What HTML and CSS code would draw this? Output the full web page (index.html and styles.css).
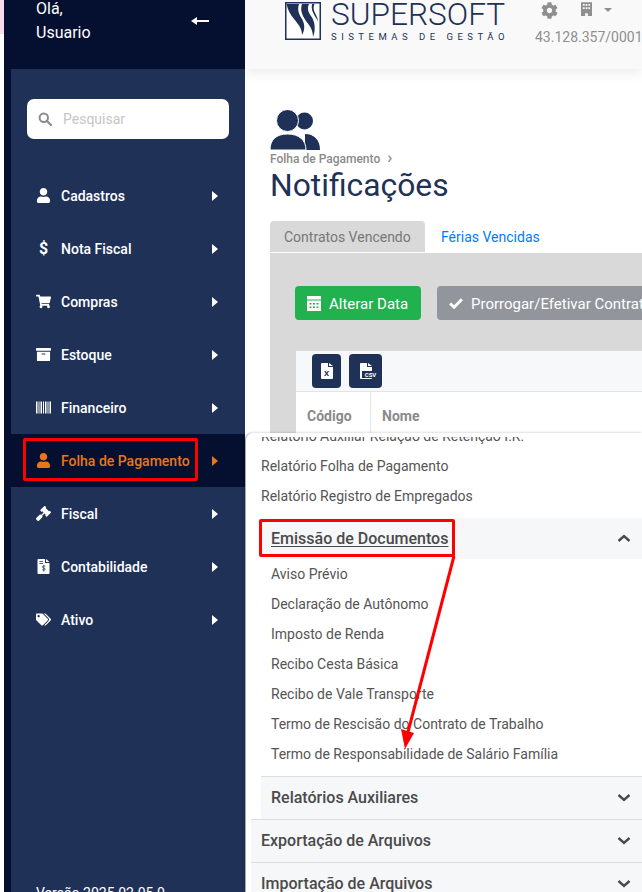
FILE: index.html
```html
<!DOCTYPE html>
<html lang="pt-BR">
<head>
<meta charset="utf-8"/>
<title>Supersoft - Notificações</title>
<link rel="stylesheet" href="styles.css">
</head>
<body>
<div class="strip"><div class="strip-pink"></div></div>

<aside class="sidebar">
  <div class="side-head">
    <div class="hello">Olá,<br>Usuario</div>
    <svg class="back" viewBox="0 0 18 10"><path d="M0 5 L6 1 V4 H18 V6 H6 V9 Z" fill="#fff"/></svg>
  </div>
  <div class="side-body">
    <div class="search">
      <svg class="search-icon" viewBox="0 0 14 14"><circle cx="5.8" cy="5.8" r="4.2" fill="none" stroke="#8a8a8a" stroke-width="2"/><path d="M9 9l4 4" stroke="#8a8a8a" stroke-width="2.2" stroke-linecap="round"/></svg>
      <span class="search-text">Pesquisar</span>
    </div>
    <ul class="menu">
      <li class="menu-item">
        <svg class="menu-icon" viewBox="0 0 448 512"><path fill="currentColor" d="M224 256c70.7 0 128-57.3 128-128S294.7 0 224 0 96 57.3 96 128s57.3 128 128 128zm89.6 32h-16.7c-22.2 10.2-46.9 16-72.9 16s-50.6-5.8-72.9-16h-16.7C60.2 288 0 348.2 0 422.4V464c0 26.5 21.5 48 48 48h352c26.5 0 48-21.5 48-48v-41.6c0-74.2-60.2-134.4-134.4-134.4z"/></svg>
        <span class="menu-label">Cadastros</span><span class="caret"></span>
      </li>
      <li class="menu-item">
        <span class="menu-icon dollar">$</span>
        <span class="menu-label">Nota Fiscal</span><span class="caret"></span>
      </li>
      <li class="menu-item">
        <svg class="menu-icon" viewBox="0 0 576 512"><path fill="currentColor" d="M528.12 301.319l47.273-208C578.806 78.301 567.391 64 551.99 64H159.208l-9.166-44.81C147.758 8.021 137.93 0 126.529 0H24C10.745 0 0 10.745 0 24v16c0 13.255 10.745 24 24 24h69.883l70.248 343.435C147.325 417.1 136 435.222 136 456c0 30.928 25.072 56 56 56s56-25.072 56-56c0-15.674-6.447-29.835-16.824-40h209.647C430.447 426.165 424 440.326 424 456c0 30.928 25.072 56 56 56s56-25.072 56-56c0-22.172-12.888-41.332-31.579-50.405l5.517-24.276c3.413-15.018-8.002-29.319-23.403-29.319H218.117l-6.545-32h293.145c11.206 0 20.92-7.754 23.403-18.681z"/></svg>
        <span class="menu-label">Compras</span><span class="caret"></span>
      </li>
      <li class="menu-item">
        <svg class="menu-icon" viewBox="0 0 512 512"><path fill="currentColor" d="M32 448c0 17.7 14.3 32 32 32h384c17.7 0 32-14.3 32-32V160H32v288zm160-212c0-6.6 5.4-12 12-12h104c6.6 0 12 5.4 12 12v8c0 6.6-5.4 12-12 12H204c-6.6 0-12-5.4-12-12v-8zM480 32H32C14.3 32 0 46.3 0 64v48c0 8.8 7.2 16 16 16h480c8.8 0 16-7.2 16-16V64c0-17.7-14.3-32-32-32z"/></svg>
        <span class="menu-label">Estoque</span><span class="caret"></span>
      </li>
      <li class="menu-item">
        <svg class="menu-icon" viewBox="0 0 15 12"><path fill="currentColor" d="M0 0h1.5v12H0zM2.5 0h1v12h-1zM4.5 0h1.5v12H4.5zM7 0h1v12H7zM9 0h1.5v12H9zM11.5 0h1v12h-1zM13.5 0H15v12h-1.5z"/></svg>
        <span class="menu-label">Financeiro</span><span class="caret"></span>
      </li>
      <li class="menu-item active">
        <svg class="menu-icon" viewBox="0 0 448 512"><path fill="currentColor" d="M224 256c70.7 0 128-57.3 128-128S294.7 0 224 0 96 57.3 96 128s57.3 128 128 128zm89.6 32h-16.7c-22.2 10.2-46.9 16-72.9 16s-50.6-5.8-72.9-16h-16.7C60.2 288 0 348.2 0 422.4V464c0 26.5 21.5 48 48 48h352c26.5 0 48-21.5 48-48v-41.6c0-74.2-60.2-134.4-134.4-134.4z"/></svg>
        <span class="menu-label">Folha de Pagamento</span><span class="caret"></span>
      </li>
      <li class="menu-item">
        <svg class="menu-icon" viewBox="0 0 512 512"><path fill="currentColor" d="M504.971 199.362l-22.627-22.627c-9.373-9.373-24.569-9.373-33.941 0l-5.657 5.657L329.608 69.255l5.657-5.657c9.373-9.373 9.373-24.569 0-33.941L312.638 7.029c-9.373-9.373-24.569-9.373-33.941 0L154.246 131.48c-9.373 9.373-9.373 24.569 0 33.941l22.627 22.627c9.373 9.373 24.569 9.373 33.941 0l5.657-5.657 39.598 39.598-81.04 81.04-5.657-5.657c-12.497-12.497-32.758-12.497-45.255 0L9.373 412.118c-12.497 12.497-12.497 32.758 0 45.255l45.255 45.255c12.497 12.497 32.758 12.497 45.255 0l114.745-114.745c12.497-12.497 12.497-32.758 0-45.255l-5.657-5.657 81.04-81.04 39.598 39.598-5.657 5.657c-9.373 9.373-9.373 24.569 0 33.941l22.627 22.627c9.373 9.373 24.569 9.373 33.941 0l124.451-124.451c9.372-9.372 9.372-24.568 0-33.941z"/></svg>
        <span class="menu-label">Fiscal</span><span class="caret"></span>
      </li>
      <li class="menu-item">
        <svg class="menu-icon doc" viewBox="0 0 24 30"><path fill="currentColor" d="M2 0h13v8h9v20a2 2 0 0 1-2 2H2a2 2 0 0 1-2-2V2a2 2 0 0 1 2-2zM17 0l7 6h-7z"/><path d="M4 5h7M4 9h7" stroke="#1f3157" stroke-width="1.6"/><path d="M15.5 14.5c-2.5-1.2-6-.8-5.7 1.7.3 2.2 5.4 1.6 5.5 4 .1 2.3-3.3 2.5-6 1.3M12.5 12v13" fill="none" stroke="#1f3157" stroke-width="1.5"/></svg>
        <span class="menu-label">Contabilidade</span><span class="caret"></span>
      </li>
      <li class="menu-item">
        <svg class="menu-icon" viewBox="0 0 640 512"><path fill="currentColor" d="M497.941 225.941L286.059 14.059A48 48 0 0 0 252.118 0H48C21.49 0 0 21.49 0 48v204.118a48 48 0 0 0 14.059 33.941l211.882 211.882c18.744 18.745 49.136 18.746 67.882 0l204.118-204.118c18.745-18.745 18.745-49.137 0-67.882zM112 160c-26.51 0-48-21.49-48-48s21.49-48 48-48 48 21.49 48 48-21.49 48-48 48zm513.941 133.823L421.823 497.941c-18.745 18.745-49.137 18.745-67.882 0l-.36-.36L527.64 323.522c16.999-16.999 26.36-39.6 26.36-63.64s-9.362-46.641-26.36-63.64L331.397 0h48.721a48 48 0 0 1 33.941 14.059l211.882 211.882c18.745 18.745 18.745 49.137 0 67.882z"/></svg>
        <span class="menu-label">Ativo</span><span class="caret"></span>
      </li>
    </ul>
    <div class="version">Versão 2025.02.05.0</div>
  </div>
</aside>

<main class="main">
  <header class="topbar">
    <div class="logo">
      <svg class="logo-mark" viewBox="0 0 36 38">
        <rect x=".75" y=".75" width="34.5" height="36.5" fill="#fff" stroke="#1f3157" stroke-width="1.5"/>
        <path fill="#1f3157" d="M1.5 2H14C12 8 14 12 17 17C20 22 20 28 17 33C17 26 13 22 9 17C5 12 3 8 1.5 2Z"/>
        <path fill="#1f3157" d="M17 2H24C22 6 23 10 26 14C30 19 31 28 28 35C28 27 24 23 21 19C17 13 15 8 17 2Z"/>
        <path fill="#1f3157" d="M27 2h2.5c-1.5 3-1 6 .5 9 1.5 3 3 6 3 9-.5-2-2-4-3.5-6.5-2-3.500-3.500-7-2.500-11.500z"/>
      </svg>
      <div class="logo-text">
        <div class="logo-name">SUPERSOFT</div>
        <div class="logo-sub">SISTEMAS DE GESTÃO</div>
      </div>
    </div>
    <div class="top-tools">
      <div class="tool-icons">
        <svg class="gear" viewBox="0 0 512 512"><path fill="#8f8f8f" d="M487.4 315.7l-42.6-24.6c4.3-23.2 4.3-47 0-70.2l42.6-24.6c4.9-2.8 7.1-8.6 5.5-14-11.1-35.6-30-67.8-54.7-94.6-3.8-4.1-10-5.1-14.8-2.3L380.8 110c-17.9-15.4-38.5-27.3-60.8-35.1V25.8c0-5.6-3.9-10.5-9.4-11.7-36.7-8.2-74.3-7.8-109.2 0-5.5 1.2-9.4 6.1-9.4 11.7V75c-22.2 7.9-42.8 19.8-60.8 35.1L88.7 85.5c-4.9-2.8-11-1.9-14.8 2.3-24.7 26.7-43.6 58.9-54.7 94.6-1.7 5.4.6 11.2 5.5 14L67.3 221c-4.3 23.2-4.3 47 0 70.2l-42.6 24.6c-4.9 2.8-7.1 8.6-5.5 14 11.1 35.6 30 67.8 54.7 94.6 3.8 4.1 10 5.1 14.8 2.3l42.6-24.6c17.9 15.4 38.5 27.3 60.8 35.1v49.2c0 5.6 3.9 10.5 9.4 11.7 36.7 8.2 74.3 7.8 109.2 0 5.5-1.2 9.4-6.1 9.4-11.7v-49.2c22.2-7.9 42.8-19.8 60.8-35.1l42.6 24.6c4.9 2.8 11 1.9 14.8-2.3 24.7-26.7 43.6-58.9 54.7-94.6 1.5-5.5-.7-11.3-5.6-14.1zM256 336c-44.1 0-80-35.9-80-80s35.9-80 80-80 80 35.9 80 80-35.9 80-80 80z"/></svg>
        <svg class="building" viewBox="0 0 12 15"><path fill="#8f8f8f" fill-rule="evenodd" d="M0 0h12v15H7.5v-3h-3v3H0zM2 2v2h2V2zM5 2v2h2V2zM8 2v2h2V2zM2 5.5v2h2v-2zM5 5.5v2h2v-2zM8 5.5v2h2v-2z"/></svg>
        <span class="tool-caret"></span>
      </div>
      <div class="cnpj">43.128.357/0001</div>
    </div>
  </header>

  <section class="page">
    <svg class="page-icon" viewBox="0 0 50 40">
      <circle cx="34.5" cy="11" r="8.5" fill="#1f3157"/>
      <path d="M35 24c9 0 15 6 15 16H35z" fill="#1f3157"/>
      <circle cx="17.5" cy="10.5" r="11" fill="#1f3157" stroke="#fff" stroke-width="1"/>
      <path d="M0 40c0-10 6-16 17.5-16S36 30 36 40z" fill="#1f3157" stroke="#fff" stroke-width="1"/>
    </svg>
    <div class="crumb">Folha de Pagamento <span class="crumb-sep">›</span></div>
    <h1 class="title">Notificações</h1>
    <div class="tabs">
      <div class="tab tab-on">Contratos Vencendo</div>
      <div class="tab">Férias Vencidas</div>
    </div>
    <div class="tab-panel">
      <div class="actions">
        <button class="btn btn-green">
          <svg class="btn-icon" viewBox="0 0 14 15"><path fill="#fff" fill-rule="evenodd" d="M0 0h14v3.5H0zM0 4.5h14V15H0zM2.5 7v1.5h2V7zM6 7v1.5h2V7zM9.5 7v1.5h2V7zM2.5 10.5V12h2v-1.5zM6 10.5V12h2v-1.5zM9.5 10.5V12h2v-1.5z"/></svg>
          Alterar Data
        </button>
        <button class="btn btn-grey">
          <svg class="btn-icon" viewBox="0 0 15 12"><path fill="none" stroke="#fff" stroke-width="3.2" d="M1.2 6l4.3 4L13.8 1.5"/></svg>
          Prorrogar/Efetivar Contrato
        </button>
      </div>
      <div class="table">
        <div class="table-tools">
          <div class="file-btn">
            <svg class="file-icon" viewBox="0 0 12 16"><path fill="#fff" d="M1 0h6v4h5v11a1 1 0 0 1-1 1H1a1 1 0 0 1-1-1V1a1 1 0 0 1 1-1zM8 0l4 3H8z"/></svg>
            <span class="file-mark">X</span>
          </div>
          <div class="file-btn file-wide">
            <svg class="file-icon" viewBox="0 0 12 16"><path fill="#fff" d="M1 0h6v4h5v11a1 1 0 0 1-1 1H1a1 1 0 0 1-1-1V1a1 1 0 0 1 1-1zM8 0l4 3H8z"/></svg>
            <span class="file-mark csv">CSV</span>
          </div>
        </div>
        <div class="table-head">
          <div class="col-code">Código</div>
          <div class="col-name">Nome</div>
        </div>
      </div>
    </div>
  </section>
</main>

<div class="dropdown">
  <div class="drop-inner">
    <div class="drop-link cut">Relatório Auxiliar Relação de Retenção I.R.</div>
    <div class="drop-link">Relatório Folha de Pagamento</div>
    <div class="drop-link">Relatório Registro de Empregados</div>
    <div class="sub-group">
      <div class="acc-head sub-open">
        <span class="under">Emissão de Documentos</span>
        <svg class="chev" viewBox="0 0 14 9"><path d="M1.5 7L7 2l5.5 5" fill="none" stroke="#4a4a4a" stroke-width="2.4"/></svg>
      </div>
      <div class="drop-link">Aviso Prévio</div>
      <div class="drop-link">Declaração de Autônomo</div>
      <div class="drop-link">Imposto de Renda</div>
      <div class="drop-link">Recibo Cesta Básica</div>
      <div class="drop-link">Recibo de Vale Transporte</div>
      <div class="drop-link">Termo de Rescisão do Contrato de Trabalho</div>
      <div class="drop-link">Termo de Responsabilidade de Salário Família</div>
      <div class="acc-head sub-closed">
        <span>Relatórios Auxiliares</span>
        <svg class="chev" viewBox="0 0 14 9"><path d="M1.5 2L7 7l5.5-5" fill="none" stroke="#4a4a4a" stroke-width="2.4"/></svg>
      </div>
    </div>
    <div class="acc-head top-closed">
      <span>Exportação de Arquivos</span>
      <svg class="chev" viewBox="0 0 14 9"><path d="M1.5 2L7 7l5.5-5" fill="none" stroke="#4a4a4a" stroke-width="2.4"/></svg>
    </div>
    <div class="acc-head top-closed">
      <span>Importação de Arquivos</span>
      <svg class="chev" viewBox="0 0 14 9"><path d="M1.5 2L7 7l5.5-5" fill="none" stroke="#4a4a4a" stroke-width="2.4"/></svg>
    </div>
  </div>
</div>

<!-- marcacoes vermelhas por cima do print -->
<div class="mark mark-menu"></div>
<div class="mark mark-doc"></div>
<svg class="mark-arrow" viewBox="0 0 642 892">
  <path d="M454 556L408 732" stroke="#f00" stroke-width="3" fill="none"/>
  <path d="M405 749L401 729 414 733Z" fill="#f00"/>
</svg>
</body>
</html>
```

FILE: styles.css
```css
* { box-sizing: border-box; }
html, body { height: 100%; }
body {
  margin: 0;
  width: 642px;
  height: 892px;
  overflow: hidden;
  display: flex;
  position: relative;
  font-family: Roboto, "Liberation Sans", sans-serif;
  background: #fff;
  color: #4a4a4a;
}

.strip { width: 4px; background: #fff; flex: none; }
.strip-pink { height: 34px; background: #f9dcea; }

/* sidebar */
.sidebar { width: 241px; flex: none; background: #050f30; display: flex; flex-direction: column; position: relative; z-index: 2; }
.side-head { height: 69px; flex: none; display: flex; justify-content: space-between; align-items: flex-start; padding: 0 36px 0 32px; color: #fff; font-size: 16px; line-height: 24px; }
.hello { margin-top: -3px; }
.back { width: 18px; height: 10px; margin-top: 16px; }
.side-body { flex: 1; margin-left: 7px; background: #1f3157; display: flex; flex-direction: column; padding-top: 30px; position: relative; min-height: 0; }

.search { margin: 0 16px; height: 40px; background: #fff; border-radius: 7px; display: flex; align-items: center; padding-left: 11px; }
.search-icon { width: 14px; height: 14px; }
.search-text { margin-left: 11px; font-size: 14px; color: #c6c6c6; }

.menu { list-style: none; margin: 30px 0 0; padding: 0; }
.menu-item { height: 53px; display: flex; align-items: center; padding-left: 25px; color: #fff; font-size: 14px; font-weight: 500; }
.menu-icon { width: 15px; height: 15px; flex: none; }
.dollar { font-size: 16px; font-weight: 700; text-align: center; line-height: 15px; }
.menu-label { margin-left: 10px; }
.caret { margin-left: auto; margin-right: 27px; width: 0; height: 0; border-left: 6px solid currentColor; border-top: 5px solid transparent; border-bottom: 5px solid transparent; }
.menu-item.active { background: #050f30; color: #e8771a; margin-left: -7px; padding-left: 32px; }
.version { position: absolute; left: 25px; top: 814px; color: #fff; font-size: 14px; line-height: 20px; white-space: nowrap; }

/* topo */
.main { flex: 1; min-width: 0; display: flex; flex-direction: column; overflow: hidden; }
.topbar { height: 69px; flex: none; background: #f9f9f9; box-shadow: 0 2px 14px rgba(0, 0, 0, .1); display: flex; padding-left: 40px; position: relative; }
.logo { display: flex; gap: 10px; padding-top: 2px; height: 40px; width: 221px; flex: none; }
.logo-mark { width: 36px; height: 38px; flex: none; }
.logo-name { font-size: 31.6px; font-weight: 300; color: #1f3157; line-height: 28px; white-space: nowrap; margin-top: -1px; }
.logo-sub { font-size: 9.5px; color: #1f3157; letter-spacing: 4.5px; line-height: 12px; margin-top: 2px; white-space: nowrap; }
.top-tools { margin-left: 29px; flex: none; width: 110px; }
.tool-icons { display: flex; align-items: flex-start; height: 24px; padding: 2px 0 0 6px; }
.gear { width: 17px; height: 17px; }
.building { width: 11px; height: 14px; margin-left: 23px; }
.tool-caret { margin: 6px 0 0 12px; width: 0; height: 0; border-top: 4px solid #8f8f8f; border-left: 4px solid transparent; border-right: 4px solid transparent; }
.cnpj { font-size: 14px; color: #8f8f8f; line-height: 20px; margin-top: 3px; white-space: nowrap; }

/* conteudo */
.page { padding: 41px 0 0 25px; }
.page-icon { display: block; width: 50px; height: 40px; }
.crumb { font-size: 12px; font-weight: 500; color: #8a8a8a; line-height: 16px; margin-top: 1px; white-space: nowrap; }
.crumb-sep { font-size: 17px; margin-left: 4px; line-height: 12px; }
.title { margin: 1px 0 0; font-size: 31.8px; font-weight: 400; color: #1f3157; line-height: 34px; white-space: nowrap; }
.tabs { display: flex; margin-top: 19px; height: 31px; font-size: 14px; white-space: nowrap; }
.tab { padding: 0 14px; line-height: 32px; color: #007bff; margin-left: 2px; }
.tab-on { background: #d9d9d9; color: #777; border-radius: 4px 4px 0 0; margin-left: 0; width: 155px; }
.tab-panel { margin-top: 1px; background: #d9d9d9; padding: 33px 0 0 25px; width: 480px; height: 300px; }
.actions { display: flex; gap: 16px; }
.btn { height: 34px; border: none; border-radius: 4px; color: #fff; font-family: inherit; font-size: 15px; font-weight: 400; display: flex; align-items: center; gap: 8px; padding: 1px 12px 0; white-space: nowrap; flex: none; }
.btn-green { background: #22b14f; width: 126px; }
.btn-grey { background: #92959c; }
.btn-icon { width: 14px; height: 15px; flex: none; }
.table { margin: 31px 0 0 1px; background: #fff; }
.table-tools { height: 41px; background: #f7f8fa; border-bottom: 1px solid #e4e4e4; display: flex; gap: 8px; padding: 3px 0 0 16px; }
.file-btn { width: 29px; height: 34px; background: #1f3157; border-radius: 4px; position: relative; display: flex; justify-content: center; padding-top: 9px; }
.file-wide { width: 33px; }
.file-icon { width: 12px; height: 16px; }
.file-mark { position: absolute; left: 0; right: 0; top: 15px; text-align: center; font-size: 8px; font-weight: 700; color: #1f3157; line-height: 10px; }
.csv { font-size: 6px; background: #1f3157; color: #fff; left: 13px; right: 3px; top: 17px; line-height: 7px; }
.table-head { display: flex; height: 50px; font-size: 14px; font-weight: 700; color: #8a8a8a; line-height: 48px; }
.col-code { width: 75px; padding-left: 11px; border-right: 1px solid #e4e4e4; }
.col-name { padding-left: 11px; }

/* menu aberto por cima da pagina */
.dropdown { position: absolute; left: 245px; top: 433px; right: 0; bottom: 0; background: #fff; border-left: 1px solid #aaa; border-top-left-radius: 7px; box-shadow: 0 0 3px rgba(0, 0, 0, .25); padding-top: 4px; z-index: 3; }
.drop-inner { height: 100%; overflow: hidden; padding-left: 5px; }
.drop-link { height: 30px; line-height: 30px; padding-left: 10px; font-size: 14px; color: #555; white-space: nowrap; }
.cut { margin-top: -16px; }
.sub-group { margin-top: 7px; margin-left: 10px; }
.acc-head { display: flex; align-items: center; justify-content: space-between; background: #f6f7f9; font-size: 16px; font-weight: 500; color: #4a4a4a; padding-right: 11px; white-space: nowrap; }
.sub-open { height: 41px; padding-left: 10px; }
.sub-closed { height: 43px; padding: 0 11px 2px 10px; margin-top: 7px; border-top: 1px solid #ddd; }
.top-closed { height: 43px; padding: 0 11px 2px 10px; border-top: 1px solid #ddd; }
.under { text-decoration: underline; text-underline-offset: 2px; }
.chev { width: 14px; height: 9px; }

.mark { position: absolute; border: 3px solid #f00; border-radius: 2px; z-index: 4; }
.mark-menu { left: 23px; top: 438px; width: 175px; height: 43px; }
.mark-doc { left: 259px; top: 519px; width: 196px; height: 38px; }
.mark-arrow { position: absolute; left: 0; top: 0; width: 642px; height: 892px; z-index: 4; pointer-events: none; }
```
